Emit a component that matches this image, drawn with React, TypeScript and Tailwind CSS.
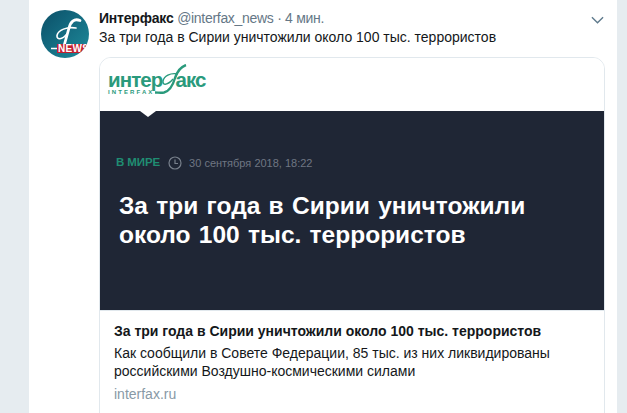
const sans = "font-['Liberation_Sans',Arial,sans-serif]"

function Avatar() {
  return (
    <div className="relative w-[48px] h-[48px] rounded-full overflow-hidden shrink-0 bg-gradient-to-br from-[#0b4f68] to-[#1f8c9c]">
      <svg viewBox="0 0 48 48" className="absolute inset-0 w-full h-full" fill="none">
        <path d="M39 10.5C33 8 29.5 12 28 18L23 36" stroke="#fff" strokeWidth="2.8" strokeLinecap="round" />
        <path d="M35 18C26 16.5 17 20 16 25.5C15.5 30 21 30 26 24" stroke="#fff" strokeWidth="1.6" strokeLinecap="round" />
        <path d="M10 38.5H17" stroke="#fff" strokeWidth="1.6" />
      </svg>
      <div className="absolute left-[16px] top-[34px] w-[32px] h-[9px] bg-[#c4202f] text-white text-[10px] leading-[9px] font-bold tracking-[0.3px] pl-[1px] whitespace-nowrap">
        NEWS
      </div>
    </div>
  )
}

function Logo() {
  return (
    <div className="relative w-[102px] h-[33px] text-[#2a9a7c]">
      <div className="absolute left-0 top-[7px] flex text-[20.5px] leading-[18px] font-bold tracking-[-0.9px] whitespace-nowrap">
        <span>интер</span>
        <span className="ml-[13px]">акс</span>
      </div>
      <svg viewBox="0 0 102 33" className="absolute inset-0 w-full h-full" fill="none" stroke="currentColor">
        <path d="M78 1C72 3 69 8 67 14C65 21 62 27 56 28.5C53 29 50 28.5 47 28.5" strokeWidth="2.4" />
        <path d="M70 10C62 8.5 56 12 55 17C54.5 22 60 21 65 15" strokeWidth="1.4" />
      </svg>
      <div className="absolute left-0 top-[25px] text-[6px] leading-[7px] font-bold tracking-[2.1px]">INTERFAX</div>
    </div>
  )
}

export default function App() {
  return (
    <div className={`h-[413px] overflow-hidden bg-[#e6ecf0] pl-[29px] pr-[10px] ${sans}`}>
      <div className="h-full bg-white flex pl-[12px] pr-[12px] pt-[10px]">
        <Avatar />
        <div className="ml-[10px] flex-1 min-w-0">
          <div className="flex items-center justify-between h-[17px]">
            <div className="text-[14px] leading-[17px] whitespace-nowrap">
              <span className="font-bold text-[#14171a] tracking-[-0.2px]">Интерфакс</span>
              <span className="text-[#657786] tracking-[-0.3px]"> @interfax_news · 4 мин.</span>
            </div>
            <svg viewBox="0 0 14 8" className="w-[13px] h-[8px] mr-[1px] mt-[2px]" fill="none" stroke="#5f7a8c" strokeWidth="1.5">
              <path d="M1 1L7 7L13 1" />
            </svg>
          </div>
          <div className="text-[14px] leading-[18px] mt-[1px] text-[#14171a] whitespace-nowrap">
            За три года в Сирии уничтожили около 100 тыс. террористов
          </div>
          <div className="mt-[11px] h-[370px] border border-[#e1e8ed] rounded-[12px] overflow-hidden">
            <div className="h-[53px] pl-[8px] pt-[6px] bg-white">
              <Logo />
            </div>
            <div className="relative h-[199px] bg-[#1f2635] pl-[19px] pt-[45px]">
              <div className="absolute left-[40px] top-0 w-0 h-0 border-x-[8px] border-x-transparent border-t-[6px] border-t-white" />
              <div className="flex items-center h-[14px] -ml-[3px]">
                <span className="text-[11.5px] font-bold tracking-[-0.1px] text-[#1f8d72]">В МИРЕ</span>
                <svg viewBox="0 0 14 14" className="w-[14px] h-[14px] ml-[8px]" fill="none" stroke="#78808c" strokeWidth="1.2">
                  <circle cx="7" cy="7" r="6" />
                  <path d="M7 3.5V7.5H10" />
                </svg>
                <span className="ml-[7px] text-[11px] text-[#6f7683]">30 сентября 2018, 18:22</span>
              </div>
              <div className="mt-[21px] text-[24.5px] leading-[29px] [word-spacing:1.5px] font-bold text-white whitespace-nowrap">
                За три года в Сирии уничтожили
                <br />
                около 100 тыс. террористов
              </div>
            </div>
            <div className="border-t border-[#e1e8ed] px-[14px] pt-[11px]">
              <div className="text-[14px] leading-[18px] font-bold text-[#14171a] whitespace-nowrap">
                За три года в Сирии уничтожили около 100 тыс. террористов
              </div>
              <div className="mt-[4px] text-[14px] leading-[18px] text-[#14171a]">
                Как сообщили в Совете Федерации, 85 тыс. из них ликвидированы
                <br />
                российскими Воздушно-космическими силами
              </div>
              <div className="mt-[5px] text-[14px] leading-[18px] text-[#8899a6]">interfax.ru</div>
            </div>
          </div>
        </div>
      </div>
    </div>
  )
}
